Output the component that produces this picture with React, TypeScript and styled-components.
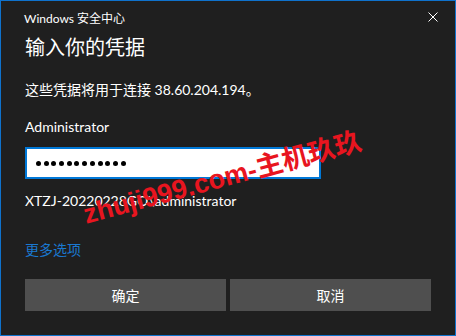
import React from "react";
import styled, { createGlobalStyle } from "styled-components";

const GlobalStyle = createGlobalStyle`
  html, body {
    margin: 0;
    padding: 0;
    background: #1f1f1f;
  }
  body {
    font-family: Lato, "Noto Sans CJK SC", sans-serif;
    color: #ffffff;
  }
`;

const Frame = styled.div`
  position: relative;
  width: 456px;
  height: 336px;
  box-sizing: border-box;
  border: 1px solid #0f72cc;
  background: #1f1f1f;
  overflow: hidden;
`;

const Header = styled.div`
  display: flex;
  align-items: center;
  justify-content: space-between;
  height: 32px;
  padding: 0 17px 0 23px;
  font-size: 12px;
`;

const CloseButton = styled.button`
  display: flex;
  align-items: center;
  justify-content: center;
  width: 10px;
  height: 10px;
  padding: 0;
  border: none;
  background: transparent;
`;

const Body = styled.div`
  display: flex;
  flex-direction: column;
  padding: 0 24px 0 24px;
`;

const Title = styled.h1`
  margin: 0;
  font-size: 20px;
  font-weight: 400;
  line-height: 28px;
`;

const Line = styled.p<{ $gap: number }>`
  margin: ${(p) => p.$gap}px 0 0;
  font-size: 14px;
  line-height: 20px;
`;

const Field = styled.div`
  display: flex;
  align-items: center;
  gap: 2.7px;
  box-sizing: border-box;
  width: 296px;
  height: 32px;
  margin-top: 10px;
  padding: 0 9px;
  border: 2px solid #0078d7;
  background: #ffffff;
`;

const Dot = styled.span`
  width: 5px;
  height: 5px;
  border-radius: 50%;
  background: #000000;
`;

const MoreLink = styled.a`
  margin-top: 29px;
  font-size: 14px;
  line-height: 20px;
  color: #1a78d0;
  text-decoration: none;
`;

const Buttons = styled.div`
  display: grid;
  grid-template-columns: 201px 201px;
  gap: 4px;
  margin-top: 19px;
`;

const Button = styled.button`
  height: 32px;
  border: none;
  background: #4f4f4f;
  color: #ffffff;
  font-family: Lato, "Noto Sans CJK SC", sans-serif;
  font-size: 14px;
`;

const Watermark = styled.div`
  position: absolute;
  left: 78px;
  top: 162px;
  transform: rotate(-15deg);
  transform-origin: center;
  color: #e8151f;
  font-family: "Liberation Sans", "Noto Sans CJK SC", sans-serif;
  font-weight: 700;
  font-size: 27px;
  line-height: 30px;
  white-space: nowrap;
  pointer-events: none;
`;

export default function App() {
  return (
    <>
      <GlobalStyle />
      <Frame>
        <Header>
          <span>Windows 安全中心</span>
          <CloseButton aria-label="关闭">
            <svg width="10" height="10" viewBox="0 0 10 10">
              <path d="M0.5 0.5 L9.5 9.5 M9.5 0.5 L0.5 9.5" stroke="#ffffff" strokeWidth="1" />
            </svg>
          </CloseButton>
        </Header>
        <Body>
          <Title>输入你的凭据</Title>
          <Line $gap={19}>这些凭据将用于连接 38.60.204.194。</Line>
          <Line $gap={17}>Administrator</Line>
          <Field>
            {Array.from({ length: 12 }).map((_, i) => (
              <Dot key={i} />
            ))}
          </Field>
          <Line $gap={12}>XTZJ-20220228GO\administrator</Line>
          <MoreLink href="#">更多选项</MoreLink>
          <Buttons>
            <Button>确定</Button>
            <Button>取消</Button>
          </Buttons>
        </Body>
        <Watermark>zhuji999.com-主机玖玖</Watermark>
      </Frame>
    </>
  );
}
